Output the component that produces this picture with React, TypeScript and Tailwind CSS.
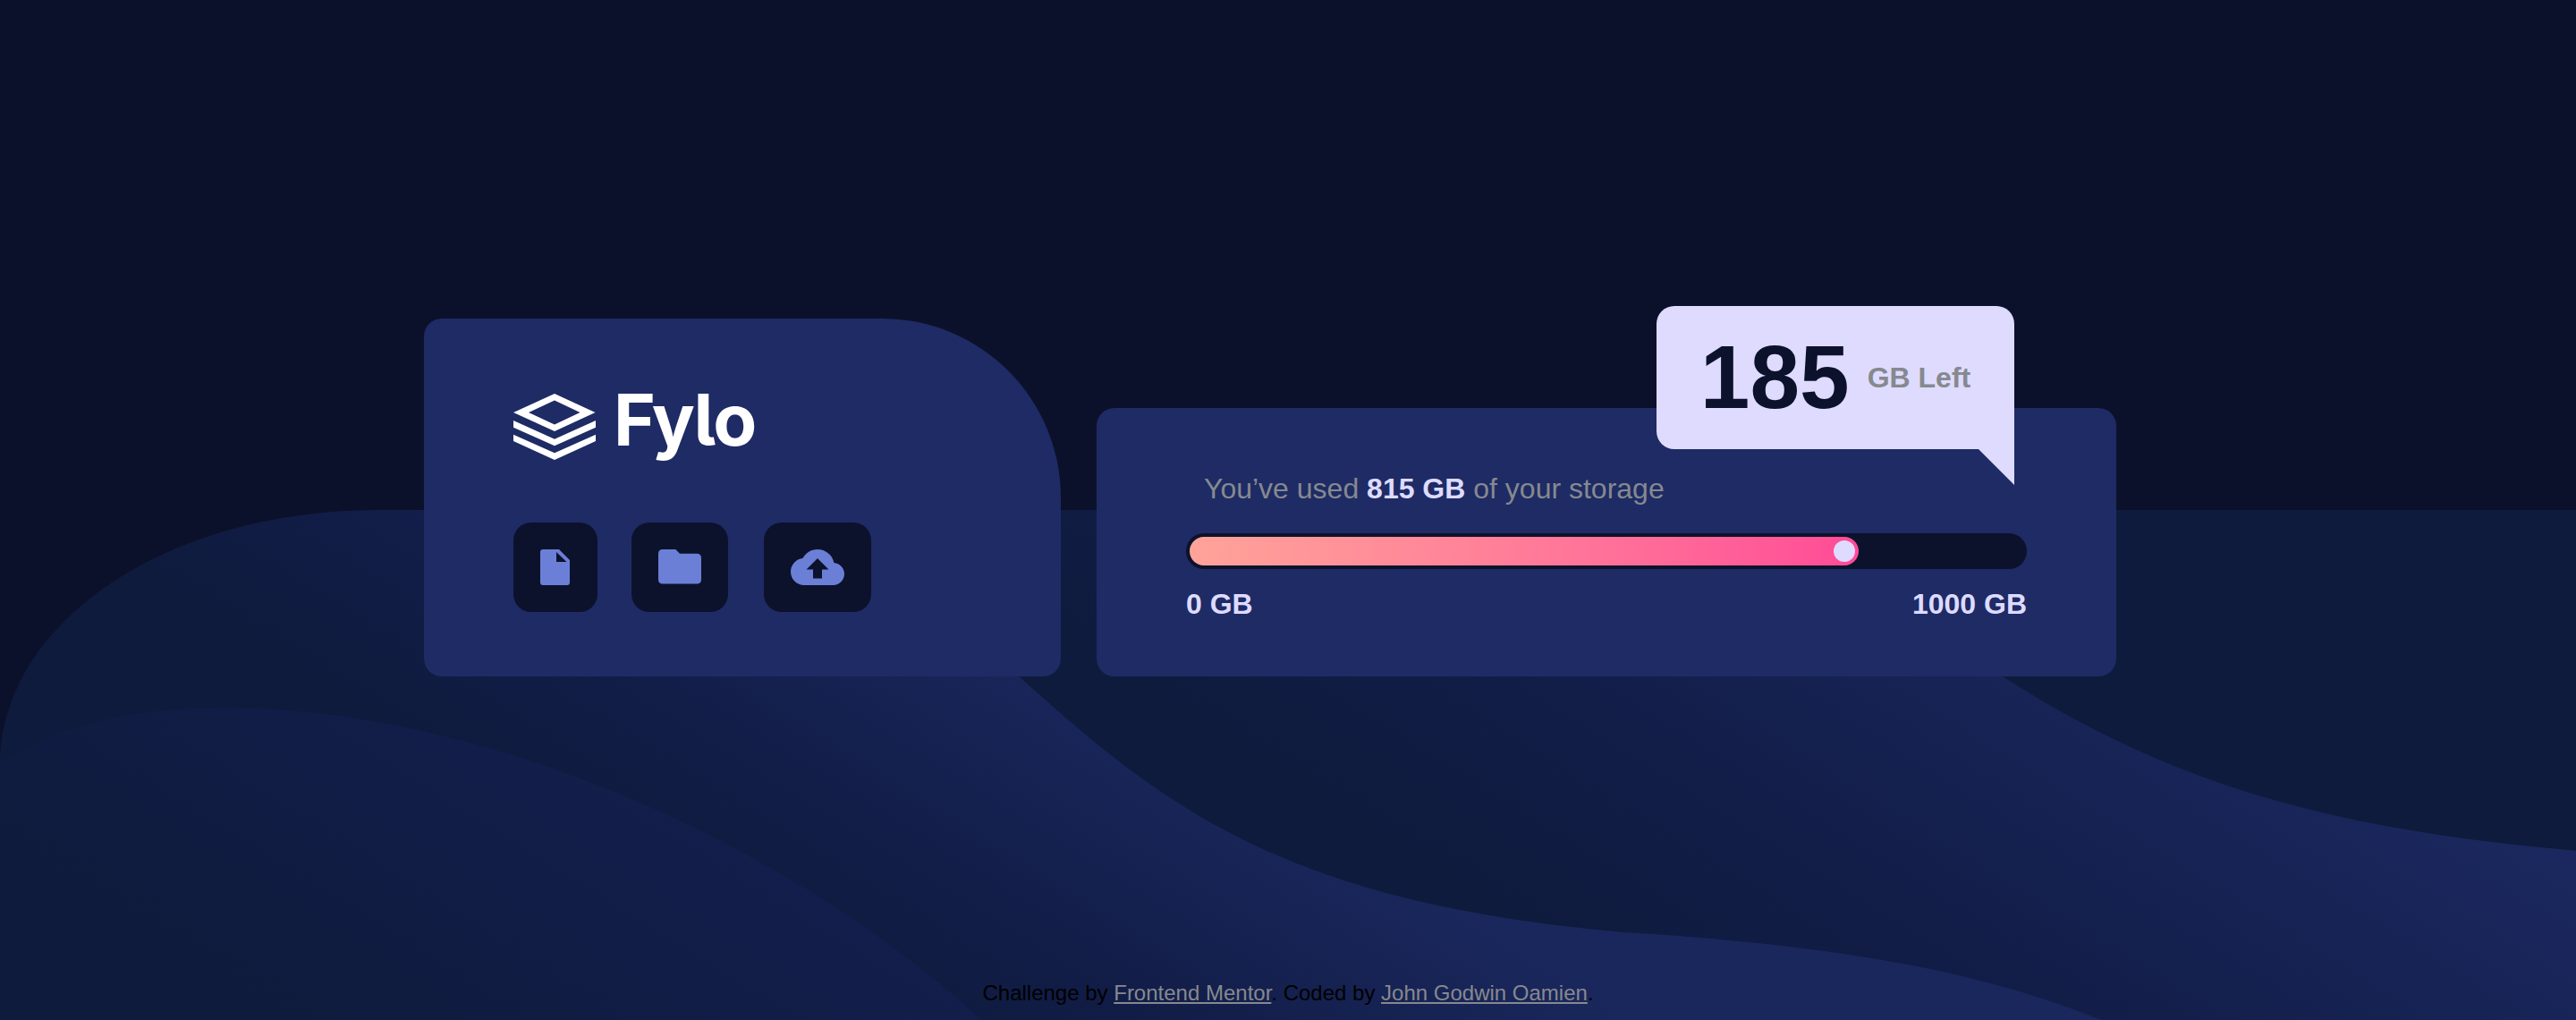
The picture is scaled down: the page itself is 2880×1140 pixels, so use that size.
import type { ReactNode } from 'react';

function Waves() {
  return (
    <svg className="absolute inset-x-0 bottom-0 h-[570px] w-full" viewBox="0 570 2880 570" preserveAspectRatio="none" aria-hidden="true">
      <defs>
        <linearGradient id="back" gradientUnits="userSpaceOnUse" x1="16" y1="-25" x2="371" y2="-595">
          <stop offset="0" stopColor="#0e1b3d" />
          <stop offset="0.35" stopColor="#121d48" />
          <stop offset="1" stopColor="#1b285f" />
        </linearGradient>
        <linearGradient id="middle" gradientUnits="userSpaceOnUse" x1="-238" y1="382" x2="0" y2="0">
          <stop offset="0" stopColor="#0e1b3d" />
          <stop offset="0.4" stopColor="#121d48" />
          <stop offset="1" stopColor="#1a275c" />
        </linearGradient>
        <linearGradient id="front" gradientUnits="userSpaceOnUse" x1="-424" y1="680" x2="-191" y2="306">
          <stop offset="0" stopColor="#0e1b3c" />
          <stop offset="1" stopColor="#131e4c" />
        </linearGradient>
      </defs>
      <path fill="#0e1b3c" d="M0 855C0 700 180 570 425 570H2880V1140H0Z" />
      <path fill="url(#back)" d="M1100 570H2040C2110 625 2160 705 2239 756C2450 893 2650 930 2880 951V1140H1100Z" />
      <path fill="url(#middle)" d="M0 855C0 700 180 570 425 570H850C980 600 1060 685 1139 756C1290 890 1420 1008 1816 1042C2080 1058 2230 1092 2349 1140H0Z" />
      <path fill="url(#front)" d="M0 855C60 811 150 791 248 791C560 791 900 958 1097 1140H0Z" />
    </svg>
  );
}

function LogoMark() {
  return (
    <svg className="h-20 w-[92px] fill-white" viewBox="0 0 92 80" aria-hidden="true">
      <path fillRule="evenodd" d="M46 4L91.5 25L46 46L0 25ZM46 11.5L17 25L46 38.500L74.500 25Z" />
      <path d="M0 34L46 54.700L92 34V41.700L46 62.300L0 41.700Z" />
      <path d="M0 49.700L46 70.300L92 49.700V57L46 78L0 57Z" />
    </svg>
  );
}

function Logo() {
  return (
    <div className="flex h-20 items-center">
      <LogoMark />
      <span className="mb-[15px] ml-5 font-['Inter',sans-serif] text-[80px] leading-[100px] font-bold tracking-[-1.5px] text-white [font-feature-settings:'cv05']">
        Fylo
      </span>
    </div>
  );
}

function Tile({ label, children }: { label: string; children: ReactNode }) {
  return (
    <button aria-label={label} className="flex h-[100px] items-center rounded-[20px] bg-[#0c122c] px-[30px] text-[#6b7fd7]">
      {children}
    </button>
  );
}

function BrandCard() {
  return (
    <section className="flex h-[400px] w-[712px] flex-col justify-between rounded-[20px] rounded-tr-[200px] bg-[#1e2b65] px-[100px] pt-20 pb-[72px]">
      <Logo />
      <div className="flex">
        <Tile label="Document">
          <svg className="h-10 w-[34px] fill-current" viewBox="0 0 34 40">
            <path fillRule="evenodd" d="M3 0H21L33 12V37Q33 40 30 40H3Q0 40 0 37V3Q0 0 3 0ZM18 3V14H29.500Z" />
          </svg>
        </Tile>
        <div className="ml-[38px] mr-10">
          <Tile label="Folder">
            <svg className="h-10 w-12 fill-current" viewBox="0 0 48 40">
              <path d="M5 0H19.300L24 4.700H43Q48 4.700 48 9.700V33.700Q48 38.500 43 38.500H5Q0 38.500 0 33.700V5Q0 0 5 0Z" />
            </svg>
          </Tile>
        </div>
        <Tile label="Upload">
          <svg className="h-10 w-[60px] fill-current" viewBox="0 0 24 16">
            <path d="M19.350 6.040A7.490 7.490 0 0 0 12 0C9.110 0 6.600 1.640 5.350 4.040A5.994 5.994 0 0 0 0 10c0 3.310 2.690 6 6 6h13c2.760 0 5-2.240 5-5 0-2.640-2.050-4.780-4.650-4.960zM14 9v4h-4V9H7l5-5 5 5h-3z" />
          </svg>
        </Tile>
      </div>
    </section>
  );
}

function StorageCard() {
  return (
    <section className="relative h-[300px] w-[1140px] rounded-[20px] bg-[#1e2b65] px-[100px] pt-[72px] text-[32px] leading-9 text-[#86898f]">
      <p className="pl-5">
        You’ve used <b className="text-[#dedbff]">815 GB</b> of your storage
      </p>
      <div className="mt-8 h-10 rounded-full bg-[#0c122c] p-1">
        <div className="flex h-8 w-[748px] items-center justify-end rounded-full bg-linear-to-r from-[#ffa399] to-[#ff4a97] pr-1">
          <div className="size-6 rounded-full bg-[#dedbff]" />
        </div>
      </div>
      <div className="mt-[21px] flex justify-between font-bold text-[#dedbff]">
        <span>0 GB</span>
        <span>1000 GB</span>
      </div>
      <div className="absolute -top-[114px] right-[114px] flex h-40 w-[400px] items-center justify-center gap-5 rounded-[20px] rounded-br-none bg-[#dedbff] font-bold">
        <span className="mb-0.5 text-[100px] leading-none text-[#0c122c]">185</span>
        <span>GB Left</span>
        <div className="absolute top-full right-0 size-10 bg-[#dedbff] [clip-path:polygon(0_0,100%_0,100%_100%)]" />
      </div>
    </section>
  );
}

export default function App() {
  return (
    <div className="relative flex h-[1140px] flex-col overflow-hidden bg-[#0c112b] font-['Liberation_Sans',sans-serif]">
      <Waves />
      <main className="relative flex h-[756px] items-end gap-10 pl-[474px]">
        <BrandCard />
        <StorageCard />
      </main>
      <footer className="relative mt-auto pb-4 text-center text-[24px] leading-7 text-black">
        Challenge by <a className="text-[#86898f] underline" href="#mentor">Frontend Mentor</a>. Coded by{' '}
        <a className="text-[#86898f] underline" href="#author">John Godwin Oamien</a>.
      </footer>
    </div>
  );
}
